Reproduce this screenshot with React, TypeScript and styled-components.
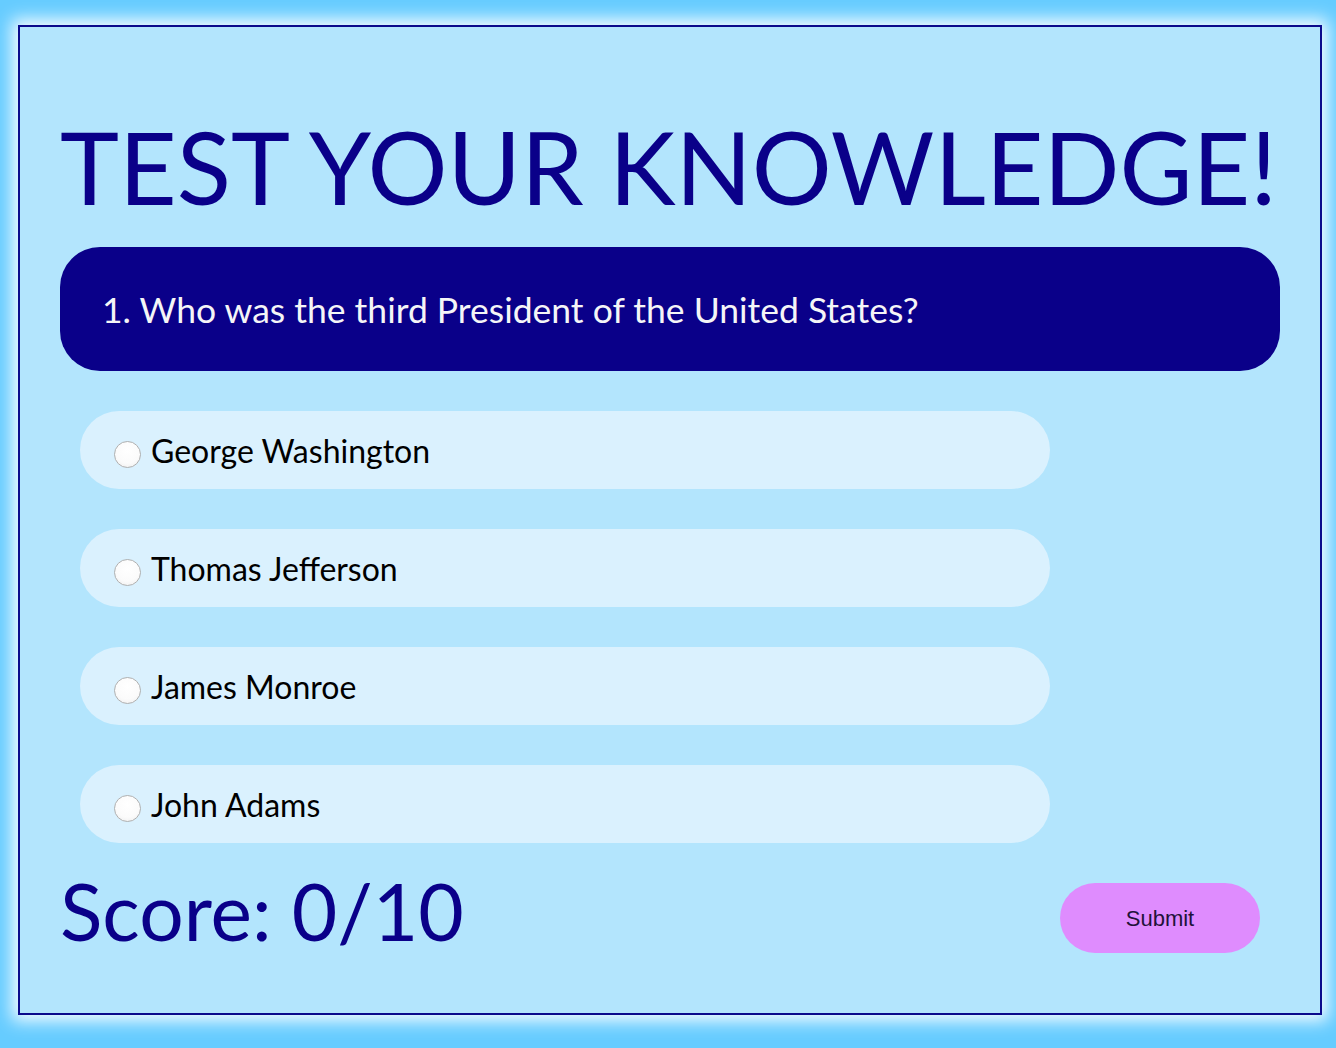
import React, { useState } from "react";
import styled, { createGlobalStyle } from "styled-components";

const GlobalStyle = createGlobalStyle`
  html, body {
    margin: 0;
    padding: 0;
    background: #66ccff;
  }
  body {
    font-family: "Lato", "Liberation Sans", sans-serif;
  }
`;

const Page = styled.div`
  padding: 25px 14px 33px 18px;
  background: #66ccff;
`;

const Card = styled.main`
  border: 2px solid #0a0a8c;
  background: #b3e5fd;
  box-shadow: 0 0 16px 6px rgba(255, 255, 255, 0.95);
  padding: 79px 40px 54px 40px;
  display: flex;
  flex-direction: column;
`;

const Title = styled.h1`
  margin: 0;
  font-family: "Lato", sans-serif;
  font-weight: 400;
  font-size: 100px;
  line-height: 120px;
  color: #0a0089;
  white-space: nowrap;
`;

const QuestionBox = styled.div`
  margin-top: 21px;
  height: 124px;
  border-radius: 40px;
  background: #0a0089;
  display: flex;
  align-items: center;
  padding-left: 42px;
`;

const QuestionText = styled.h2`
  margin: 0;
  font-family: "Lato", sans-serif;
  font-weight: 400;
  font-size: 35.5px;
  color: #f5f5f7;
`;

const Options = styled.div`
  margin-top: 40px;
  margin-left: 20px;
  display: flex;
  flex-direction: column;
  gap: 40px;
`;

const Option = styled.label`
  width: 970px;
  height: 78px;
  box-sizing: border-box;
  border-radius: 39px;
  background: #daf1fe;
  display: flex;
  align-items: center;
  padding-left: 34px;
  gap: 11px;
  cursor: pointer;
  font-family: "Lato", sans-serif;
  font-size: 32px;
  color: #000;
`;

const Radio = styled.input`
  appearance: none;
  -webkit-appearance: none;
  margin: 9px 0 0 0;
  width: 27px;
  height: 27px;
  border-radius: 50%;
  border: 1.5px solid #b0b0b0;
  background: radial-gradient(circle at 50% 35%, #ffffff 0%, #fbfbfb 60%, #ececec 100%);
  box-sizing: border-box;
  flex: none;
  &:checked {
    border: 8px solid #0a64ff;
    background: #fff;
  }
`;

const OptionText = styled.span`
  line-height: 1;
  margin-top: 2px;
  margin-left: -1px;
`;

const Footer = styled.div`
  margin-top: 20px;
  display: flex;
  justify-content: space-between;
  align-items: flex-start;
  padding-right: 20px;
`;

const Score = styled.div`
  font-family: "Lato", sans-serif;
  font-size: 78.5px;
  line-height: 96px;
  color: #0a0089;
`;

const SubmitButton = styled.button`
  margin-top: 20px;
  width: 200px;
  height: 70px;
  padding-top: 3px;
  border: none;
  border-radius: 35px;
  background: #df8cfe;
  font-family: "Liberation Sans", Arial, sans-serif;
  font-size: 22px;
  color: #22123a;
  cursor: pointer;
`;

const answers = ["George Washington", "Thomas Jefferson", "James Monroe", "John Adams"];

export default function App() {
  const [choice, setChoice] = useState<string | null>(null);
  return (
    <>
      <GlobalStyle />
      <Page>
        <Card>
          <Title>TEST YOUR KNOWLEDGE!</Title>
          <QuestionBox>
            <QuestionText>1. Who was the third President of the United States?</QuestionText>
          </QuestionBox>
          <Options>
            {answers.map((a) => (
              <Option key={a}>
                <Radio
                  type="radio"
                  name="q1"
                  checked={choice === a}
                  onChange={() => setChoice(a)}
                />
                <OptionText>{a}</OptionText>
              </Option>
            ))}
          </Options>
          <Footer>
            <Score>Score: 0/10</Score>
            <SubmitButton>Submit</SubmitButton>
          </Footer>
        </Card>
      </Page>
    </>
  );
}
